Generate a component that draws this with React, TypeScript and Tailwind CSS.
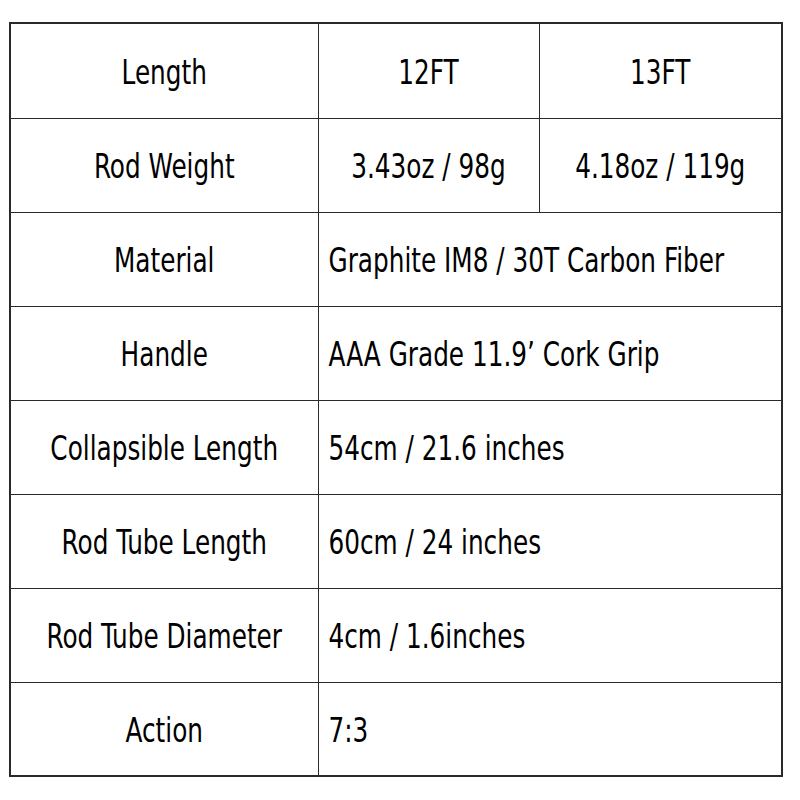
import React from "react";

const rows: { label: string; values: string[] }[] = [
  { label: "Material", values: ["Graphite IM8 / 30T Carbon Fiber"] },
  { label: "Handle", values: ["AAA Grade 11.9\u2019 Cork Grip"] },
  { label: "Collapsible Length", values: ["54cm / 21.6 inches"] },
  { label: "Rod Tube Length", values: ["60cm / 24 inches"] },
  { label: "Rod Tube Diameter", values: ["4cm / 1.6inches"] },
  { label: "Action", values: ["7:3"] },
];

function T({ children }: { children: React.ReactNode }) {
  return <span className="inline-block scale-y-[1.24] whitespace-nowrap translate-y-[2px]">{children}</span>;
}

export default function App() {
  return (
    <div className="w-[800px] h-[800px] bg-white pt-[22px] pl-[9px]" style={{ fontFamily: '"DejaVu Sans Condensed", "DejaVu Sans", sans-serif' }}>
      <table className="border-collapse border-2 border-[#2a2a2a] text-[27.5px] text-black leading-none">
        <colgroup>
          <col className="w-[308px]" />
          <col className="w-[221px]" />
          <col className="w-[243px]" />
        </colgroup>
        <tbody>
          <tr className="h-[95px]">
            <td className="border-[1.5px] border-[#2a2a2a] text-center"><T>Length</T></td>
            <td className="border-[1.5px] border-[#2a2a2a] text-center"><T>12FT</T></td>
            <td className="border-[1.5px] border-[#2a2a2a] text-center"><T>13FT</T></td>
          </tr>
          <tr className="h-[94px]">
            <td className="border-[1.5px] border-[#2a2a2a] text-center"><T>Rod Weight</T></td>
            <td className="border-[1.5px] border-[#2a2a2a] text-center"><T>3.43oz / 98g</T></td>
            <td className="border-[1.5px] border-[#2a2a2a] text-center"><T>4.18oz / 119g</T></td>
          </tr>
          {rows.map((r) => (
            <tr key={r.label} className="h-[94px]">
              <td className="border-[1.5px] border-[#2a2a2a] text-center"><T>{r.label}</T></td>
              <td colSpan={2} className="border-[1.5px] border-[#2a2a2a] text-left pl-[10px]"><T>{r.values[0]}</T></td>
            </tr>
          ))}
        </tbody>
      </table>
    </div>
  );
}
